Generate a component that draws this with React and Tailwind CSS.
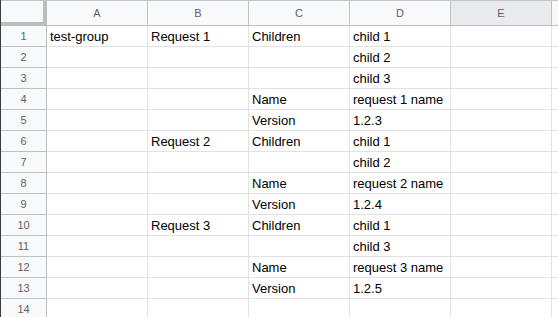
const cols = ["A", "B", "C", "D", "E", ""];

const rows = [
  ["test-group", "Request 1", "Children", "child 1"],
  ["", "", "", "child 2"],
  ["", "", "", "child 3"],
  ["", "", "Name", "request 1 name"],
  ["", "", "Version", "1.2.3"],
  ["", "Request 2", "Children", "child 1"],
  ["", "", "", "child 2"],
  ["", "", "Name", "request 2 name"],
  ["", "", "Version", "1.2.4"],
  ["", "Request 3", "Children", "child 1"],
  ["", "", "", "child 3"],
  ["", "", "Name", "request 3 name"],
  ["", "", "Version", "1.2.5"],
  ["", "", "", ""],
];

export default function App() {
  return (
    <div
      className="w-[558px] h-[317px] overflow-hidden bg-white border-l border-[#3c3c3c]"
      style={{ fontFamily: '"Liberation Sans", Arial, sans-serif' }}
    >
      {/* column headers */}
      <div className="flex h-[26px] border-t border-[#c4c4c4]">
        <div className="w-[46px] shrink-0 h-[25px] bg-[#f8f9fa] border-r-4 border-b-4 border-[#bdbdbd]" />
        {cols.map((c, k) => (
          <div
            key={k}
            className={
              "w-[101px] shrink-0 h-[25px] flex items-center justify-center text-[11px] text-[#5f6368] border-r border-b border-[#c0c0c0] " +
              (c === "E" ? "bg-[#e8eaed]" : "bg-[#f8f9fa]")
            }
          >
            {c}
          </div>
        ))}
      </div>

      {/* rows */}
      {rows.map((r, i) => (
        <div key={i} className="flex h-[21px]">
          <div className="w-[46px] shrink-0 flex items-center justify-center bg-[#f8f9fa] text-[11px] text-[#5f6368] border-r border-b border-[#c0c0c0]">
            {i + 1}
          </div>
          {[0, 1, 2, 3, 4, 5].map((j) => (
            <div
              key={j}
              className="w-[101px] shrink-0 flex items-center pl-[3px] pt-[1px] text-[13px] text-black whitespace-nowrap border-r border-b border-[#e2e2e3]"
            >
              {r[j] || ""}
            </div>
          ))}
        </div>
      ))}
    </div>
  );
}
